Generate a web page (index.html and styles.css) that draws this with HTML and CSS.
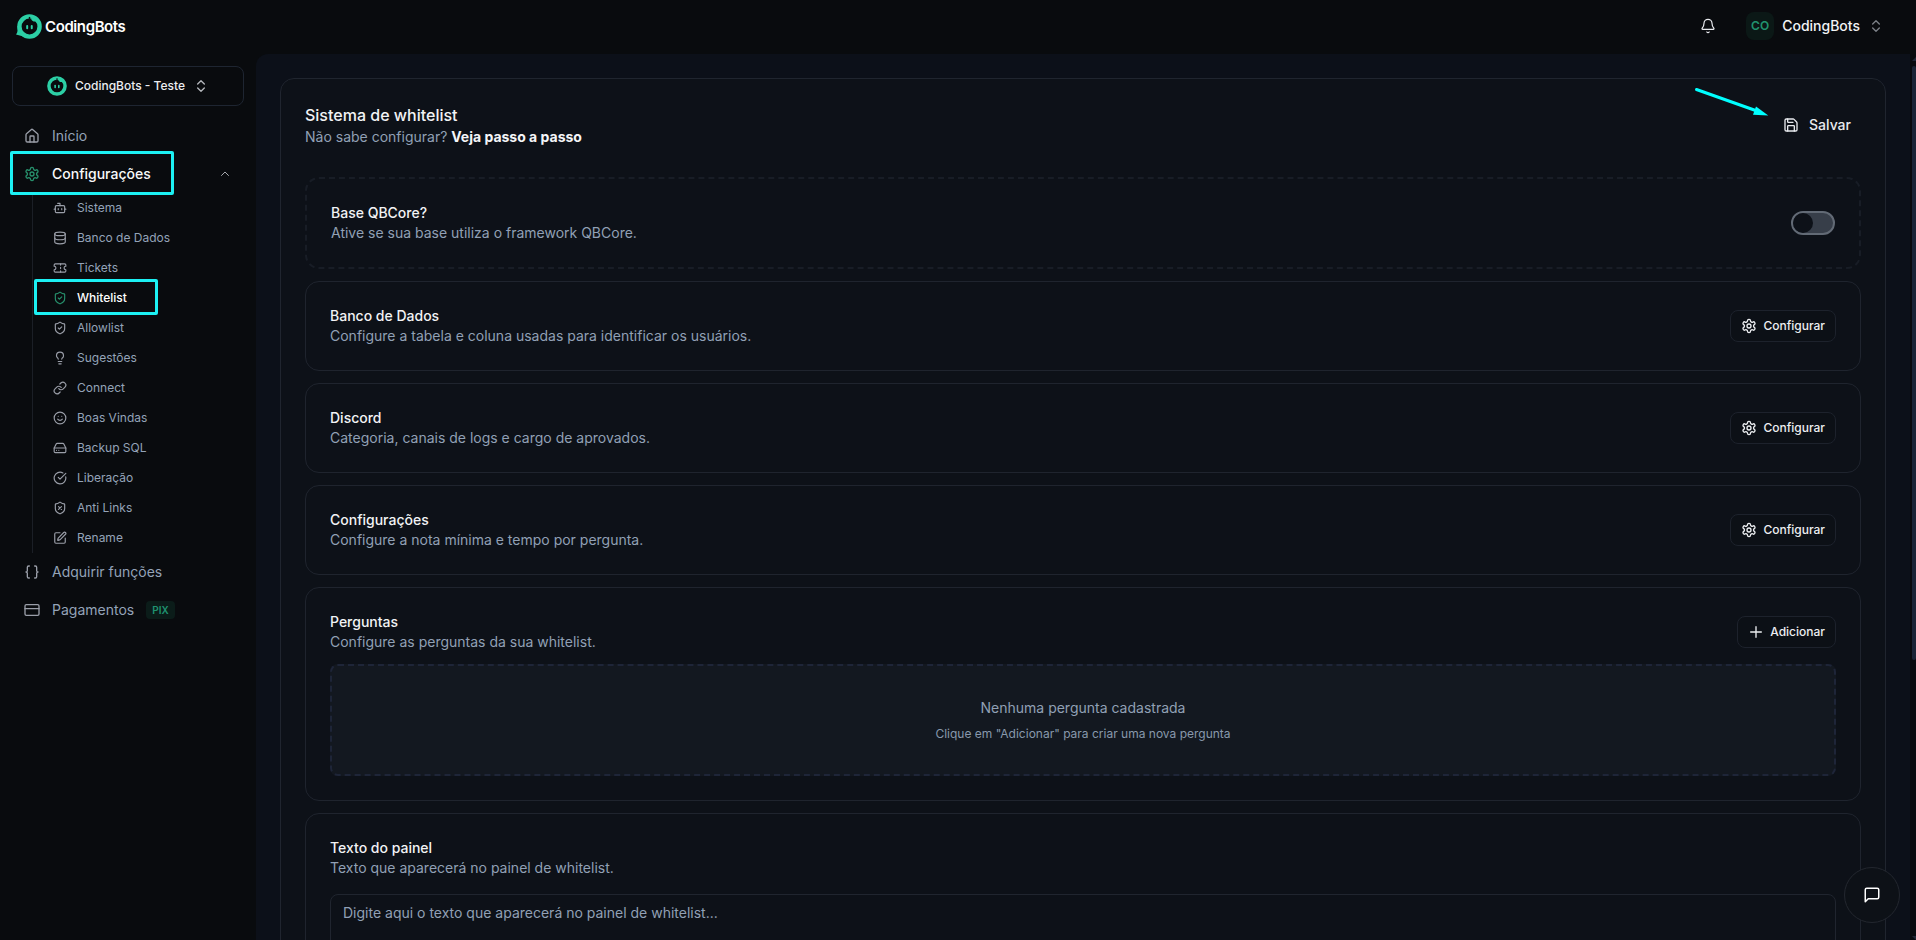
FILE: index.html
```html
<!DOCTYPE html>
<html lang="pt-BR">
<head>
<meta charset="utf-8">
<title>CodingBots</title>
<link rel="stylesheet" href="styles.css">
</head>
<body>
<svg class="defs" width="0" height="0" aria-hidden="true">
  <symbol id="home" viewBox="0 0 24 24"><path d="M15 21v-8a1 1 0 0 0-1-1h-4a1 1 0 0 0-1 1v8"/><path d="M3 10a2 2 0 0 1 .709-1.528l7-5.999a2 2 0 0 1 2.582 0l7 5.999A2 2 0 0 1 21 10v9a2 2 0 0 1-2 2H5a2 2 0 0 1-2-2z"/></symbol>
  <symbol id="gear" viewBox="0 0 24 24"><path d="M12.22 2h-.44a2 2 0 0 0-2 2v.18a2 2 0 0 1-1 1.73l-.43.25a2 2 0 0 1-2 0l-.15-.08a2 2 0 0 0-2.73.73l-.22.38a2 2 0 0 0 .73 2.73l.15.1a2 2 0 0 1 1 1.72v.51a2 2 0 0 1-1 1.74l-.15.09a2 2 0 0 0-.73 2.73l.22.38a2 2 0 0 0 2.73.73l.15-.08a2 2 0 0 1 2 0l.43.25a2 2 0 0 1 1 1.73V20a2 2 0 0 0 2 2h.44a2 2 0 0 0 2-2v-.18a2 2 0 0 1 1-1.73l.43-.25a2 2 0 0 1 2 0l.15.08a2 2 0 0 0 2.73-.73l.22-.39a2 2 0 0 0-.73-2.73l-.15-.08a2 2 0 0 1-1-1.74v-.5a2 2 0 0 1 1-1.74l.15-.09a2 2 0 0 0 .73-2.73l-.22-.38a2 2 0 0 0-2.73-.73l-.15.08a2 2 0 0 1-2 0l-.43-.25a2 2 0 0 1-1-1.73V4a2 2 0 0 0-2-2z"/><circle cx="12" cy="12" r="3"/></symbol>
  <symbol id="bot" viewBox="0 0 24 24"><path d="M12 8V4H8"/><rect width="16" height="12" x="4" y="8" rx="2"/><path d="M2 14h2M20 14h2M15 13v2M9 13v2"/></symbol>
  <symbol id="db" viewBox="0 0 24 24"><ellipse cx="12" cy="5" rx="9" ry="3"/><path d="M3 5V19A9 3 0 0 0 21 19V5"/><path d="M3 12A9 3 0 0 0 21 12"/></symbol>
  <symbol id="ticket" viewBox="0 0 24 24"><path d="M2 9a3 3 0 0 1 0 6v2a2 2 0 0 0 2 2h16a2 2 0 0 0 2-2v-2a3 3 0 0 1 0-6V7a2 2 0 0 0-2-2H4a2 2 0 0 0-2 2Z"/><path d="M13 5v2M13 17v2M13 11v2"/></symbol>
  <symbol id="shield" viewBox="0 0 24 24"><path d="M20 13c0 5-3.5 7.5-7.66 8.95a1 1 0 0 1-.67-.01C7.5 20.5 4 18 4 13V6a1 1 0 0 1 1-1c2 0 4.5-1.2 6.24-2.72a1.17 1.17 0 0 1 1.52 0C14.51 3.81 17 5 19 5a1 1 0 0 1 1 1z"/><path d="m9 12 2 2 4-4"/></symbol>
  <symbol id="shieldx" viewBox="0 0 24 24"><path d="M20 13c0 5-3.5 7.5-7.66 8.95a1 1 0 0 1-.67-.01C7.5 20.5 4 18 4 13V6a1 1 0 0 1 1-1c2 0 4.5-1.2 6.24-2.72a1.17 1.17 0 0 1 1.52 0C14.51 3.81 17 5 19 5a1 1 0 0 1 1 1z"/><path d="m14.5 9.5-5 5M9.500 9.500l5 5"/></symbol>
  <symbol id="bulb" viewBox="0 0 24 24"><path d="M15 14c.2-1 .7-1.700 1.500-2.500 1-.9 1.500-2.200 1.500-3.500A6 6 0 0 0 6 8c0 1 .2 2.200 1.500 3.500.7.7 1.300 1.500 1.500 2.500"/><path d="M9 18h6M10 22h4"/></symbol>
  <symbol id="link" viewBox="0 0 24 24"><path d="M10 13a5 5 0 0 0 7.540.54l3-3a5 5 0 0 0-7.070-7.070l-1.720 1.710"/><path d="M14 11a5 5 0 0 0-7.540-.54l-3 3a5 5 0 0 0 7.070 7.070l1.710-1.710"/></symbol>
  <symbol id="smile" viewBox="0 0 24 24"><circle cx="12" cy="12" r="10"/><path d="M8 14s1.500 2 4 2 4-2 4-2M9 9h.01M15 9h.01"/></symbol>
  <symbol id="drive" viewBox="0 0 24 24"><path d="M22 12H2"/><path d="M5.450 5.110 2 12v6a2 2 0 0 0 2 2h16a2 2 0 0 0 2-2v-6l-3.450-6.890A2 2 0 0 0 16.760 4H7.240a2 2 0 0 0-1.790 1.110z"/><path d="M6 16h.01M10 16h.01"/></symbol>
  <symbol id="check" viewBox="0 0 24 24"><path d="M21.801 10A10 10 0 1 1 17 3.335"/><path d="m9 11 3 3L22 4"/></symbol>
  <symbol id="pen" viewBox="0 0 24 24"><path d="M12 3H5a2 2 0 0 0-2 2v14a2 2 0 0 0 2 2h14a2 2 0 0 0 2-2v-7"/><path d="M18.375 2.625a1 1 0 0 1 3 3l-9.013 9.014a2 2 0 0 1-.853.505l-2.873.84a.5.5 0 0 1-.62-.62l.84-2.873a2 2 0 0 1 .506-.852z"/></symbol>
  <symbol id="braces" viewBox="0 0 24 24"><path d="M8 3H7a2 2 0 0 0-2 2v5a2 2 0 0 1-2 2 2 2 0 0 1 2 2v5c0 1.100.9 2 2 2h1"/><path d="M16 21h1a2 2 0 0 0 2-2v-5c0-1.100.9-2 2-2a2 2 0 0 1-2-2V5a2 2 0 0 0-2-2h-1"/></symbol>
  <symbol id="card" viewBox="0 0 24 24"><rect width="21" height="16" x="1.500" y="4" rx="2"/><path d="M1.500 10h21"/></symbol>
  <symbol id="updown" viewBox="0 0 24 24"><path d="m7 15 5 5 5-5M7 9l5-5 5 5"/></symbol>
  <symbol id="up" viewBox="0 0 24 24"><path d="m5 15 7-7 7 7"/></symbol>
  <symbol id="bell" viewBox="0 0 24 24"><path d="M10.268 21a2 2 0 0 0 3.464 0"/><path d="M3.262 15.326A1 1 0 0 0 4 17h16a1 1 0 0 0 .74-1.673C19.410 13.956 18 12.499 18 8A6 6 0 0 0 6 8c0 4.499-1.411 5.956-2.738 7.326"/></symbol>
  <symbol id="save" viewBox="0 0 24 24"><path d="M15.200 3a2 2 0 0 1 1.400.6l3.800 3.800a2 2 0 0 1 .6 1.400V19a2 2 0 0 1-2 2H5a2 2 0 0 1-2-2V5a2 2 0 0 1 2-2z"/><path d="M17 21v-7a1 1 0 0 0-1-1H8a1 1 0 0 0-1 1v7M7 3v4a1 1 0 0 0 1 1h7"/></symbol>
  <symbol id="plus" viewBox="0 0 24 24"><path d="M4 12h16M12 4v16"/></symbol>
  <symbol id="chat" viewBox="0 0 24 24"><path d="M21 15a2 2 0 0 1-2 2H7l-4 4V5a2 2 0 0 1 2-2h14a2 2 0 0 1 2 2z"/></symbol>
  <symbol id="face" viewBox="0 0 24 24"><circle class="mark-ring" cx="12" cy="12" r="9.700"/><path class="mark-fill" d="M13.500 4.500C14 7 17 8.200 20 6.500L18 4z"/><path class="mark-stem" d="M12 2.800V6"/><rect class="mark-fill" x="8.800" y="10.500" width="1.900" height="4.200" rx=".9"/><rect class="mark-fill" x="13.200" y="10.500" width="1.900" height="4.200" rx=".9"/></symbol>
</svg>

<div class="app">
  <header class="topbar">
    <div class="brand">
      <svg class="brand-mark" viewBox="-1 0 25 24"><path class="mark-fill" d="M.3 11C.8 16 .5 18-1 19.700L8 22z"/><use href="#face" width="24" height="24"/></svg>
      <span class="brand-name">CodingBots</span>
    </div>
    <div class="account">
      <svg class="icon bell"><use href="#bell"/></svg>
      <span class="avatar">CO</span>
      <span class="account-name">CodingBots</span>
      <svg class="icon updown"><use href="#updown"/></svg>
    </div>
  </header>

  <aside class="sidebar">
    <button class="team">
      <svg class="team-mark"><use href="#face"/></svg>
      <span>CodingBots - Teste</span>
      <svg class="icon updown light"><use href="#updown"/></svg>
    </button>
    <nav class="nav">
      <a class="item"><svg class="icon"><use href="#home"/></svg><span>Início</span></a>
      <a class="item active"><svg class="icon"><use href="#gear"/></svg><span>Configurações</span><svg class="icon caret"><use href="#up"/></svg><i class="mark mark-config"></i></a>
      <div class="subnav">
        <a class="sub"><svg class="icon"><use href="#bot"/></svg>Sistema</a>
        <a class="sub"><svg class="icon"><use href="#db"/></svg>Banco de Dados</a>
        <a class="sub"><svg class="icon"><use href="#ticket"/></svg>Tickets</a>
        <a class="sub active"><svg class="icon"><use href="#shield"/></svg>Whitelist<i class="mark mark-whitelist"></i></a>
        <a class="sub"><svg class="icon"><use href="#shield"/></svg>Allowlist</a>
        <a class="sub"><svg class="icon"><use href="#bulb"/></svg>Sugestões</a>
        <a class="sub"><svg class="icon"><use href="#link"/></svg>Connect</a>
        <a class="sub"><svg class="icon"><use href="#smile"/></svg>Boas Vindas</a>
        <a class="sub"><svg class="icon"><use href="#drive"/></svg>Backup SQL</a>
        <a class="sub"><svg class="icon"><use href="#check"/></svg>Liberação</a>
        <a class="sub"><svg class="icon"><use href="#shieldx"/></svg>Anti Links</a>
        <a class="sub"><svg class="icon"><use href="#pen"/></svg>Rename</a>
      </div>
      <a class="item"><svg class="icon"><use href="#braces"/></svg><span>Adquirir funções</span></a>
      <a class="item"><svg class="icon"><use href="#card"/></svg><span>Pagamentos</span><span class="badge">PIX</span></a>
    </nav>
  </aside>

  <main class="main">
    <section class="panel">
      <div class="panel-head">
        <div>
          <h1>Sistema de whitelist</h1>
          <p class="desc">Não sabe configurar? <strong>Veja passo a passo</strong></p>
        </div>
        <button class="save"><svg class="icon"><use href="#save"/></svg>Salvar</button>
      </div>

      <div class="stack">
        <div class="block dashed row">
          <div><h2>Base QBCore?</h2><p class="desc">Ative se sua base utiliza o framework QBCore.</p></div>
          <span class="switch"><i class="knob"></i></span>
        </div>
        <div class="block row">
          <div><h2>Banco de Dados</h2><p class="desc">Configure a tabela e coluna usadas para identificar os usuários.</p></div>
          <button class="btn"><svg class="icon"><use href="#gear"/></svg>Configurar</button>
        </div>
        <div class="block row">
          <div><h2>Discord</h2><p class="desc">Categoria, canais de logs e cargo de aprovados.</p></div>
          <button class="btn"><svg class="icon"><use href="#gear"/></svg>Configurar</button>
        </div>
        <div class="block row">
          <div><h2>Configurações</h2><p class="desc">Configure a nota mínima e tempo por pergunta.</p></div>
          <button class="btn"><svg class="icon"><use href="#gear"/></svg>Configurar</button>
        </div>
        <div class="block">
          <div class="row">
            <div><h2>Perguntas</h2><p class="desc">Configure as perguntas da sua whitelist.</p></div>
            <button class="btn"><svg class="icon"><use href="#plus"/></svg>Adicionar</button>
          </div>
          <div class="empty"><p class="desc">Nenhuma pergunta cadastrada</p><p class="hint">Clique em "Adicionar" para criar uma nova pergunta</p></div>
        </div>
        <div class="block">
          <h2>Texto do painel</h2><p class="desc">Texto que aparecerá no painel de whitelist.</p>
          <div class="textarea">Digite aqui o texto que aparecerá no painel de whitelist...</div>
        </div>
      </div>
    </section>
  </main>
  <div class="scrollbar"><i class="arrow-up"></i><i class="thumb"></i><i class="arrow-down"></i></div>
</div>

<svg class="pointer" width="80" height="34" viewBox="0 0 80 34"><path class="pointer-line" d="M6.500 5.500 67 27"/><path class="pointer-head" d="M66 22.500 78.300 31.500 63 30.800z"/></svg>
<button class="chat"><svg class="icon"><use href="#chat"/></svg></button>
</body>
</html>
```
FILE: styles.css
```css
* { box-sizing: border-box; }
html, body { height: 100%; margin: 0; overflow: hidden; }
body { background: #090b0e; color: #e8eaee; font-family: Inter, "Noto Sans", sans-serif; font-size: 14px; line-height: 20px; }
h1, h2, p { margin: 0; font-weight: 500; }
button { font: inherit; color: inherit; background: none; border: 0; padding: 0; }
.defs { position: absolute; }
.icon { width: 16px; height: 16px; flex: none; fill: none; stroke: currentColor; stroke-width: 2; stroke-linecap: round; stroke-linejoin: round; }

.app { display: grid; grid-template: 54px 1fr / 256px 1fr 6px; height: 100vh; }
.topbar { grid-column: 1 / -1; display: flex; justify-content: space-between; padding: 12px 32px 0 16px; }
.brand { display: flex; align-items: center; gap: 3px; height: 28px; }
.brand-mark { width: 26px; height: 25px; }
.mark-ring { fill: none; stroke: #2ccfa5; stroke-width: 4.2; }
.mark-fill { fill: #2ccfa5; stroke: none; }
.mark-stem { fill: none; stroke: #0b1a18; stroke-width: 1.4; }
.brand-name { font-size: 15px; font-weight: 600; letter-spacing: -0.4px; line-height: 22px; padding-top: 1px; color: #fff; }
.account { display: flex; align-items: center; height: 28px; }
.bell { margin-right: 30px; stroke-width: 1.8; }
.avatar { display: grid; place-items: center; width: 28px; height: 28px; margin-right: 8px; border-radius: 8px; background: #0b1816; color: #21936f; font-size: 12px; font-weight: 600; }
.account-name { margin-right: 8px; font-weight: 500; color: #f2f3f5; }
.updown { color: #7c8087; }
.updown.light { color: #b4b7bc; }

.sidebar { padding: 12px 12px 0; }
.team { display: flex; align-items: center; justify-content: center; gap: 8px; width: 232px; height: 40px; border: 1px solid #1e2531; border-radius: 8px; font-size: 12px; font-weight: 500; color: #eceef1; }
.team-mark { width: 20px; height: 20px; flex: none; }
.nav { margin-top: 11px; color: #94a3b8; }
.item { position: relative; display: flex; align-items: center; height: 38px; padding: 0 12px; }
.item > .icon { margin-right: 12px; color: #9a9ea8; }
.item.active { color: #f8f9fa; font-weight: 500; }
.item.active > .icon { color: #27906c; }
.item.active > .caret { width: 12px; height: 12px; margin: 0 1px 0 auto; color: #a5a8ad; }
.subnav { margin: 0 0 0 20px; border-left: 1px solid #1b1f26; }
.sub { position: relative; display: flex; align-items: center; gap: 10px; height: 30px; padding-left: 20px; font-size: 12px; }
.sub .icon { width: 14px; height: 14px; color: #9a9ea8; }
.sub.active { color: #fff; font-weight: 500; }
.sub.active .icon { color: #27906c; }
.badge { margin-left: 12px; padding: 1px 6px; border-radius: 4px; background: #0b1c19; color: #1f9270; font-size: 10px; line-height: 16px; font-weight: 600; }
.mark { position: absolute; border: 3px solid #1cf0f3; border-radius: 2px; }
.mark-config { left: -2px; top: -4px; width: 164px; height: 44px; }
.mark-whitelist { left: 1px; top: -4px; width: 124px; height: 36px; }

.main { padding: 24px; background: #0c1019; border-top-left-radius: 12px; overflow: hidden; }
.panel { height: 1100px; padding: 24px; border: 1px solid #20252f; border-radius: 14px; background: #0d1118; }
.panel-head { display: flex; justify-content: space-between; align-items: center; height: 44px; margin-bottom: 30px; }
h1 { font-size: 16px; line-height: 24px; color: #f2f3f5; }
h2 { font-size: 14px; line-height: 20px; color: #f2f3f5; }
.desc { font-weight: 400; color: #91a0b5; }
.desc strong { font-weight: 700; color: #f4f5f7; }
.save { display: flex; align-items: center; gap: 10px; margin-right: 10px; font-weight: 500; }
.stack { display: flex; flex-direction: column; gap: 12px; }
.block { padding: 24px; border: 1px solid #1f242e; border-radius: 14px; }
.block.dashed { border: 2px dashed #181d26; }
.row { display: flex; justify-content: space-between; align-items: center; }
.btn { display: flex; align-items: center; gap: 6px; height: 32px; padding: 0 10px; border: 1px solid #1d222c; border-radius: 8px; background: #0c1016; font-size: 12px; font-weight: 500; color: #eceef1; }
.switch { width: 44px; height: 24px; padding: 0; border: 2px solid #626a75; border-radius: 12px; background: #373e49; }
.knob { display: block; width: 20px; height: 20px; border-radius: 50%; background: #0d1118; }
.empty { height: 112px; margin-top: 12px; padding: 30px 0; border: 2px dashed #1e2538; border-radius: 8px; background: #131820; text-align: center; }
.empty .desc { margin-top: 2px; }
.hint { margin-top: 8px; font-size: 12px; line-height: 16px; font-weight: 400; color: #8898ac; }
.textarea { height: 160px; margin-top: 16px; padding: 8px 12px; border: 1px solid #20252f; border-radius: 8px; color: #91a0b5; }

.scrollbar { display: flex; flex-direction: column; padding: 3px 0 0 2px; background: #080a0e; }
.arrow-up { height: 4px; margin-bottom: 5px; background: #1e2636; clip-path: polygon(100% 0, 100% 100%, 0 100%); }
.thumb { height: 594px; border-radius: 2px; background: #1a2436; }
.arrow-down { height: 4px; margin-top: auto; background: #1e2636; clip-path: polygon(0 0, 100% 0, 100% 100%); }
.pointer { position: absolute; left: 1690px; top: 84px; }
.pointer-line { stroke: #0ff; stroke-width: 3; stroke-linecap: round; }
.pointer-head { fill: #0ff; }
.chat { position: absolute; left: 1844px; top: 867px; display: grid; place-items: center; width: 56px; height: 56px; border: 1px solid #23272f; border-radius: 50%; background: #0d1117; color: #fff; }
.chat .icon { width: 18px; height: 18px; }
```
